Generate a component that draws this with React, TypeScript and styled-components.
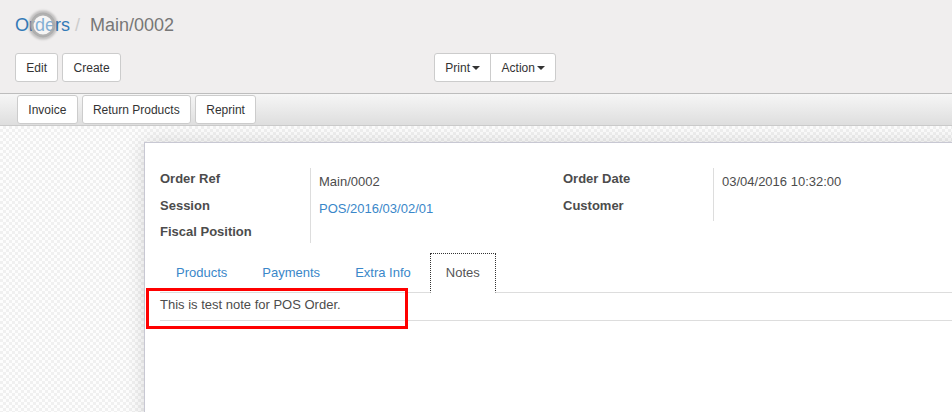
import React from "react";
import styled, { createGlobalStyle, css } from "styled-components";

const GlobalStyle = createGlobalStyle`
  html, body { margin: 0; padding: 0; }
  body {
    font-family: "Liberation Sans", Arial, Helvetica, sans-serif;
    font-size: 13px;
    color: #4c4c4c;
    background: #ffffff;
  }
  * { box-sizing: border-box; }
`;

const Page = styled.div`
  position: relative;
  width: 952px;
  height: 412px;
  overflow: hidden;
  display: flex;
  flex-direction: column;
`;

const ControlPanel = styled.div`
  background: #f0eeee;
  padding: 12px 15px 11px 15px;
  border-bottom: 1px solid #bdbdbd;
`;

const Breadcrumb = styled.div`
  font-size: 18px;
  line-height: 26px;
  height: 26px;
  margin-bottom: 15px;
  white-space: nowrap;
`;

const CrumbLink = styled.span`
  color: #337ab7;
`;

const CrumbSep = styled.span`
  color: #cccccc;
  padding: 0 5px;
`;

const CrumbCurrent = styled.span`
  color: #777777;
`;

const ButtonRow = styled.div`
  display: grid;
  grid-template-columns: 419px auto;
  height: 29px;
`;

const ButtonGroup = styled.div<{ $attached?: boolean }>`
  display: flex;
  gap: ${(p) => (p.$attached ? "0" : "4px")};
`;

const Button = styled.button<{ $pos?: "first" | "last" }>`
  display: inline-flex;
  align-items: center;
  height: 29px;
  padding: 0 10.3px;
  font-family: "Liberation Sans", Arial, Helvetica, sans-serif;
  font-size: 12px;
  color: #333333;
  background: #ffffff;
  border: 1px solid #cccccc;
  border-radius: 3px;
  cursor: pointer;
  ${(p) =>
    p.$pos === "first" &&
    css`
      border-top-right-radius: 0;
      border-bottom-right-radius: 0;
    `}
  ${(p) =>
    p.$pos === "last" &&
    css`
      border-top-left-radius: 0;
      border-bottom-left-radius: 0;
      margin-left: -1px;
    `}
`;

const Caret = styled.span`
  display: inline-block;
  width: 0;
  height: 0;
  margin-left: 2px;
  border-top: 4px solid #333333;
  border-left: 4px solid transparent;
  border-right: 4px solid transparent;
`;

const StatusBar = styled.div`
  display: flex;
  gap: 4px;
  height: 32px;
  padding: 1px 0 0 17px;
  background: linear-gradient(to bottom, #f6f6f6, #dedede);
  border-bottom: 1px solid #cacaca;
`;

const SheetBg = styled.div`
  flex: 1;
  overflow: hidden;
  padding: 16px 0 0 144px;
  background-color: #fdfdfd;
  background-image:
    linear-gradient(45deg, #f0f0f0 25%, transparent 25%, transparent 75%, #f0f0f0 75%),
    linear-gradient(45deg, #f0f0f0 25%, transparent 25%, transparent 75%, #f0f0f0 75%);
  background-size: 6px 6px;
  background-position: 0 0, 3px 3px;
`;

const Sheet = styled.div`
  width: 900px;
  min-height: 300px;
  background: #ffffff;
  border: 1px solid #c8c8d3;
  box-shadow: 0 0 18px rgba(0, 0, 0, 0.14);
  padding: 25px 0 0 15px;
`;

const Groups = styled.div`
  display: grid;
  grid-template-columns: 403px 403px;
`;

const FieldGroup = styled.div`
  display: grid;
  grid-template-columns: 150px 1fr;
  grid-template-rows: 27px 26px 22px;
  align-self: start;
`;

const Label = styled.div`
  font-weight: bold;
  line-height: 18px;
  padding-top: 2px;
  white-space: nowrap;
`;

const Value = styled.div<{ $link?: boolean }>`
  border-left: 1px solid #dddddd;
  padding: 5px 0 0 8px;
  line-height: 18px;
  white-space: nowrap;
  color: ${(p) => (p.$link ? "#3a87c9" : "#4c4c4c")};
`;

const Notebook = styled.div`
  margin-top: 10px;
`;

const TabList = styled.div`
  display: flex;
  border-bottom: 1px solid #dddddd;
  height: 40px;
`;

const Tab = styled.div<{ $active?: boolean }>`
  height: 40px;
  padding: 10px 15px 0 15px;
  line-height: 18px;
  margin-right: 3px;
  border: 1px solid transparent;
  color: #3a87c9;
  ${(p) =>
    p.$active &&
    css`
      color: #555555;
      background: #ffffff;
      border: 1px dotted #333333;
      border-bottom: 1px solid #ffffff;
    `}
`;

const TabContent = styled.div`
  padding: 3px 0 6px 0;
  line-height: 18px;
  border-bottom: 1px solid #dddddd;
`;

const Highlight = styled.div`
  position: absolute;
  left: 146px;
  top: 288px;
  width: 262px;
  height: 41px;
  border: 3px solid #ff0000;
  pointer-events: none;
`;

const CursorRing = styled.svg`
  position: absolute;
  left: 26px;
  top: 8px;
  width: 34px;
  height: 34px;
  pointer-events: none;
`;

export default function App() {
  return (
    <Page>
      <GlobalStyle />
      <ControlPanel>
        <Breadcrumb>
          <CrumbLink>Orders</CrumbLink>
          <CrumbSep>/{"\u00a0"}</CrumbSep>
          <CrumbCurrent>Main/0002</CrumbCurrent>
        </Breadcrumb>
        <ButtonRow>
          <ButtonGroup>
            <Button>Edit</Button>
            <Button>Create</Button>
          </ButtonGroup>
          <ButtonGroup $attached>
            <Button $pos="first">
              Print <Caret />
            </Button>
            <Button $pos="last">
              Action <Caret />
            </Button>
          </ButtonGroup>
        </ButtonRow>
      </ControlPanel>
      <StatusBar>
        <Button>Invoice</Button>
        <Button>Return Products</Button>
        <Button>Reprint</Button>
      </StatusBar>
      <SheetBg>
        <Sheet>
          <Groups>
            <FieldGroup>
              <Label>Order Ref</Label>
              <Value>Main/0002</Value>
              <Label>Session</Label>
              <Value $link>POS/2016/03/02/01</Value>
              <Label>Fiscal Position</Label>
              <Value />
            </FieldGroup>
            <FieldGroup>
              <Label>Order Date</Label>
              <Value>03/04/2016 10:32:00</Value>
              <Label>Customer</Label>
              <Value />
            </FieldGroup>
          </Groups>
          <Notebook>
            <TabList>
              <Tab>Products</Tab>
              <Tab>Payments</Tab>
              <Tab>Extra Info</Tab>
              <Tab $active>Notes</Tab>
            </TabList>
            <TabContent>This is test note for POS Order.</TabContent>
          </Notebook>
        </Sheet>
      </SheetBg>
      <Highlight />
      <CursorRing viewBox="0 0 34 34">
        <defs>
          <filter id="blur1" x="-50%" y="-50%" width="200%" height="200%">
            <feGaussianBlur stdDeviation="1.2" />
          </filter>
        </defs>
        <circle cx="17" cy="17" r="13" fill="none" stroke="rgba(0,0,0,0.22)" strokeWidth="3" filter="url(#blur1)" />
        <circle cx="17" cy="17" r="11" fill="rgba(255,255,255,0.4)" stroke="rgba(170,170,170,0.9)" strokeWidth="3" />
      </CursorRing>
    </Page>
  );
}
